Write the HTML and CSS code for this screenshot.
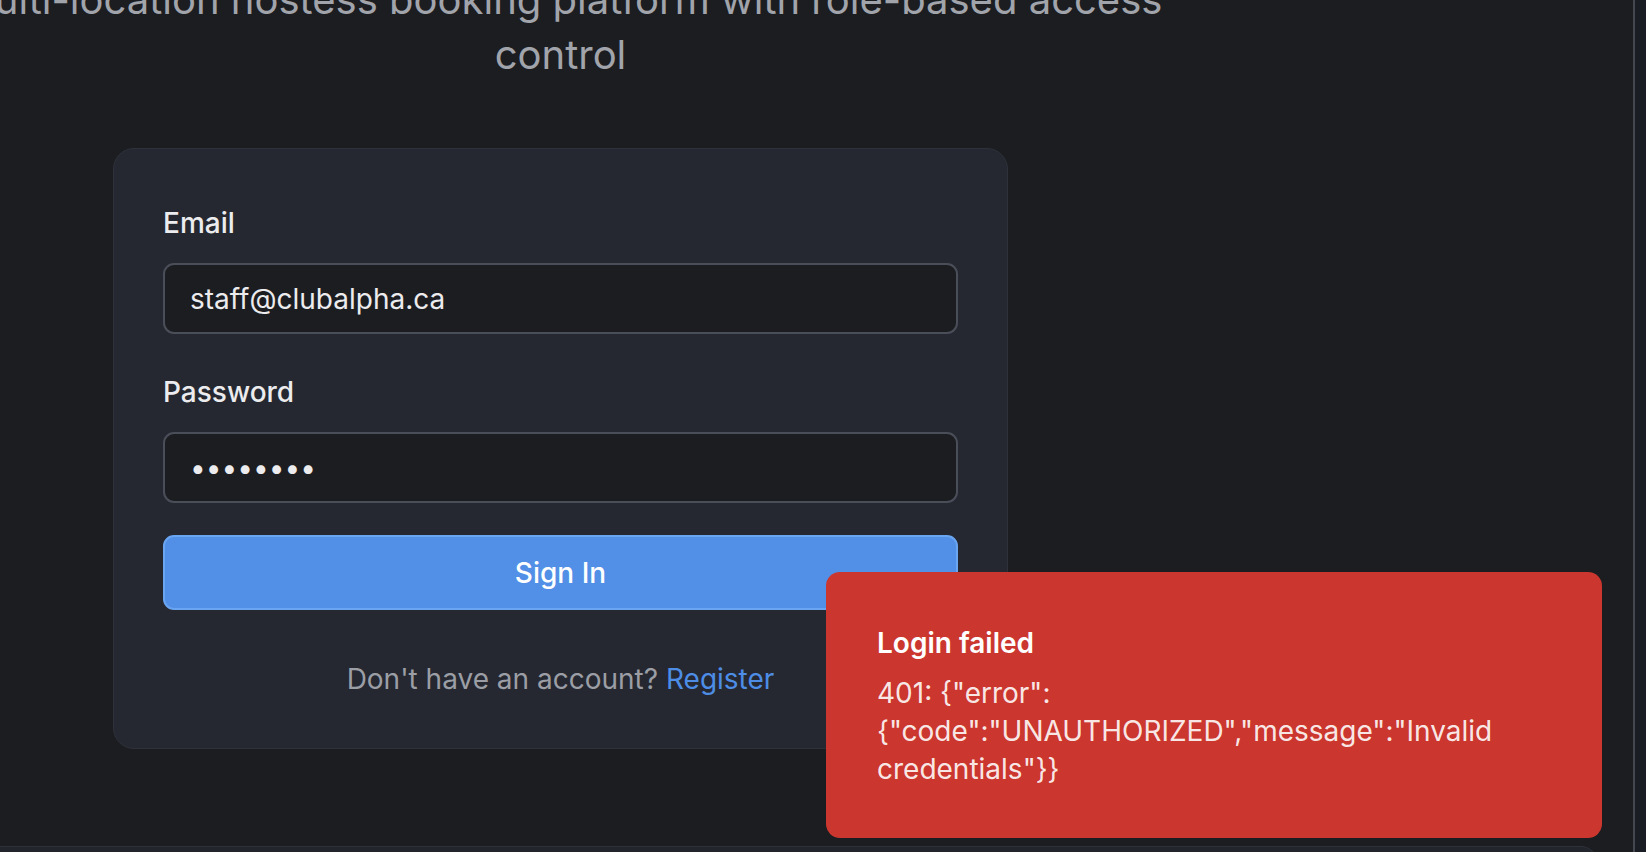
FILE: index.html
```html
<!DOCTYPE html>
<html lang="en">
<head>
<meta charset="utf-8">
<title>Sign in</title>
<link rel="stylesheet" href="styles.css">
</head>
<body>
<div class="app">
  <main class="main">
    <section class="auth">
      <p class="tagline">Multi-location hostess booking platform with role-based access control</p>
      <form class="card">
        <div class="field">
          <label class="label" for="email">Email</label>
          <input class="input" id="email" type="email" value="staff@clubalpha.ca">
        </div>
        <div class="field">
          <label class="label" for="password">Password</label>
          <input class="input" id="password" type="password" value="12345678">
        </div>
        <button class="btn" type="button">Sign In</button>
        <p class="alt">Don't have an account? <a class="link" href="#">Register</a></p>
      </form>
    </section>
    <div class="panel"></div>
  </main>
  <div class="rail"></div>
</div>
<div class="toast" role="alert">
  <div class="toast-title">Login failed</div>
  <div class="toast-desc">401: {"error": {"code":"UNAUTHORIZED","message":"Invalid credentials"}}</div>
</div>
</body>
</html>
```

FILE: styles.css
```css
* { box-sizing: border-box; }

html, body {
  margin: 0;
  height: 100%;
}

body {
  background: #1c1d21;
  font-family: Inter, "Noto Sans", sans-serif;
  color: #e6e7ea;
  overflow: hidden;
}

.app {
  display: flex;
  height: 852px;
}

.main {
  flex: 1;
  display: flex;
  flex-direction: column;
  overflow: hidden;
}

.auth {
  width: 1121px;
  display: flex;
  flex-direction: column;
  align-items: center;
  margin-top: -28px;
  flex-shrink: 0;
}

.tagline {
  width: 1260px;
  flex-shrink: 0;
  margin: 0;
  text-align: center;
  font-size: 40px;
  line-height: 55px;
  color: #a1a4ab;
}

.card {
  width: 895px;
  margin: 66px 0 0;
  padding: 50px 49px 48px;
  border: 1px solid #2e3139;
  border-radius: 21px;
  background: #252830;
  display: flex;
  flex-direction: column;
}

.field {
  display: flex;
  flex-direction: column;
  gap: 15px;
  margin-bottom: 34px;
}

.field + .field { margin-bottom: 32px; }

.label {
  font-size: 28px;
  line-height: 49px;
  font-weight: 500;
  color: #ececee;
}

.input {
  height: 71px;
  padding: 0 25px;
  border: 2px solid #4a4e58;
  border-radius: 11px;
  background: #1c1d21;
  color: #ececee;
  font-family: Inter, "Noto Sans", sans-serif;
  font-size: 28px;
  outline: none;
}

.btn {
  height: 75px;
  border: 2px solid #6aa5f2;
  border-radius: 11px;
  background: #528fe6;
  color: #ffffff;
  font-family: Inter, "Noto Sans", sans-serif;
  font-size: 28px;
  font-weight: 500;
}

.alt {
  margin: 48px 0 0;
  text-align: center;
  font-size: 28px;
  line-height: 42px;
  color: #9b9ea5;
}

.link {
  color: #4d8de6;
  text-decoration: none;
}

.panel {
  flex-shrink: 0;
  width: 1617px;
  height: 40px;
  margin: 97px 0 0 -20px;
  border-top: 1px solid #2e3139;
  border-right: 1px solid #2e3139;
  border-radius: 0 16px 0 0;
  background: #22252c;
}

.rail {
  width: 13px;
  flex-shrink: 0;
  border-left: 2px solid #44474f;
  background: #1b1d25;
}

.toast {
  position: fixed;
  left: 826px;
  top: 572px;
  width: 776px;
  height: 266px;
  padding: 51px 51px 49px;
  border-radius: 14px;
  background: #cb372e;
  color: #ffffff;
}

.toast-title {
  font-size: 28px;
  line-height: 40px;
  font-weight: 600;
  margin-bottom: 11px;
}

.toast-desc {
  font-size: 28px;
  line-height: 38px;
  color: rgba(255, 255, 255, 0.9);
}
```
